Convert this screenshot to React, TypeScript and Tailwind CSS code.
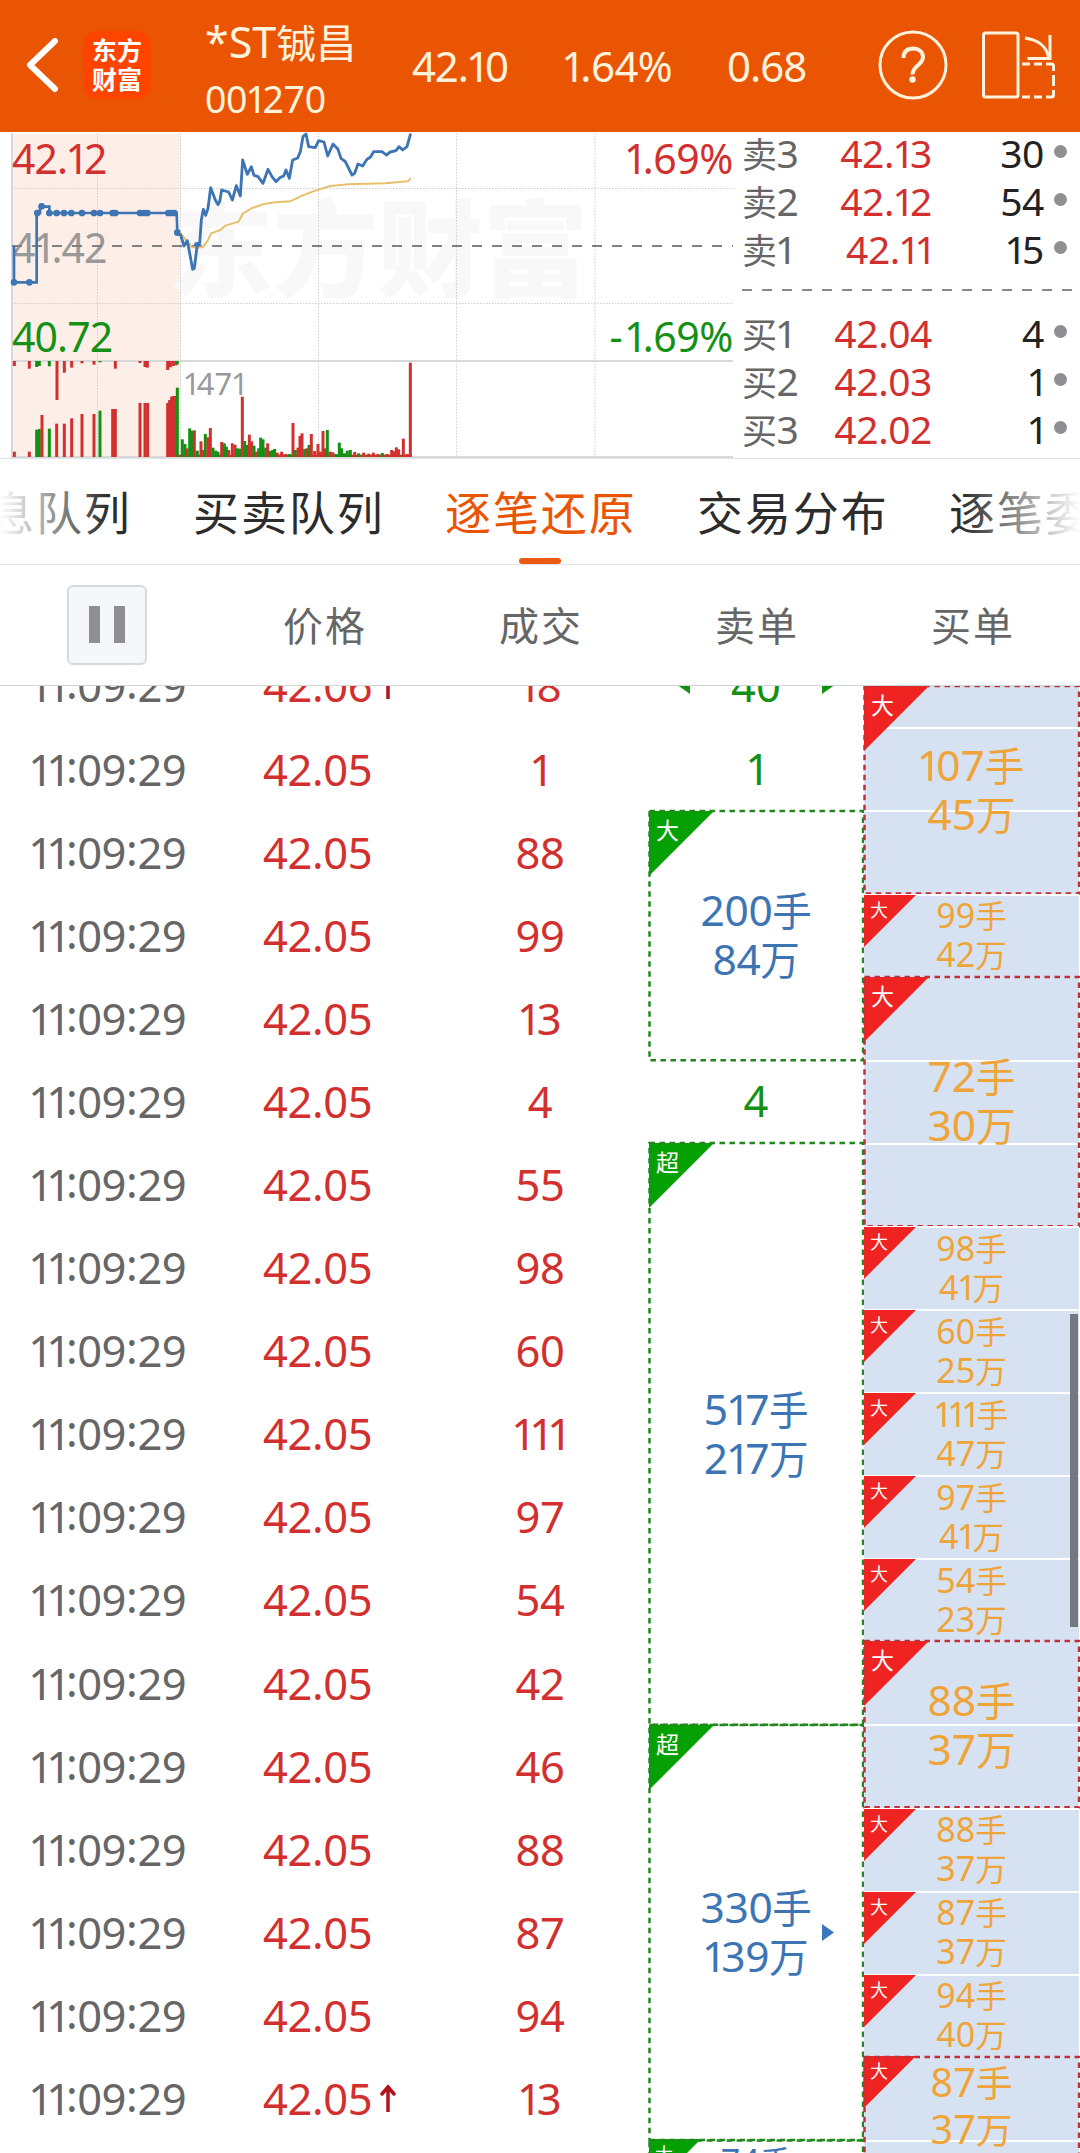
import React from "react";

/** Renders a label with narrow figure ones and slightly smaller Han glyphs. */
function Txt({ children, han = "text-[0.93em] leading-none" }: { children: string; han?: string }) {
  return (
    <>
      {children.split(/(1|[\u4e00-\u9fff]+)/).map((part, i) => {
        if (part === "") return null;
        if (part === "1")
          return (
            <span key={i} className="relative -left-[0.04em] tracking-[-0.16em]">
              1
            </span>
          );
        if (/[\u4e00-\u9fff]/.test(part))
          return (
            <span key={i} className={han}>
              {part}
            </span>
          );
        return <React.Fragment key={i}>{part}</React.Fragment>;
      })}
    </>
  );
}

const RED = "#d2302f";
const GREEN = "#149114";

type Bar = [number, number, "r" | "g"];

const preTop: Bar[] = [
  [43, 708, "r"], [88, 716, "r"], [110, 711, "g"], [118, 708, "g"], [148, 709, "g"], [171, 810, "r"],
  [193, 728, "r"], [215, 713, "r"], [246, 700, "r"], [282, 704, "r"], [300, 697, "g"], [346, 716, "r"],
  [420, 699, "r"], [435, 711, "r"], [442, 713, "r"], [503, 720, "r"], [511, 712, "r"], [520, 708, "r"],
  [528, 706, "r"], [532, 703, "g"],
];
const preBottom: Bar[] = [
  [43, 965, "r"], [88, 965, "r"], [110, 899, "g"], [118, 897, "g"], [126, 855, "r"], [148, 896, "g"],
  [170, 881, "r"], [193, 881, "r"], [215, 865, "r"], [246, 852, "r"], [282, 852, "r"], [300, 842, "g"],
  [338, 837, "r"], [346, 837, "r"], [420, 819, "r"], [435, 819, "r"], [443, 819, "r"], [503, 819, "r"],
  [509, 810, "r"], [515, 800, "r"], [520, 798, "r"], [526, 798, "r"], [532, 773, "g"],
];
const volume: Bar[] = [
  [31, 178, "g"], [39, 192, "g"], [45, 205, "r"], [53, 145, "g"], [60, 152, "g"], [67, 151, "r"],
  [76, 212, "g"], [87, 184, "r"], [93, 210, "r"], [100, 162, "g"], [108, 172, "r"], [115, 144, "r"],
  [123, 203, "g"], [131, 212, "g"], [138, 215, "g"], [149, 186, "r"], [157, 190, "g"], [163, 200, "g"],
  [170, 210, "r"], [181, 190, "r"], [189, 194, "r"], [196, 205, "g"], [203, 206, "g"], [211, 50, "r"],
  [218, 183, "g"], [225, 195, "g"], [232, 164, "r"], [239, 184, "r"], [246, 197, "g"], [253, 215, "r"],
  [260, 205, "g"], [266, 173, "g"], [273, 178, "g"], [281, 203, "g"], [287, 190, "r"], [295, 213, "g"],
  [302, 210, "g"], [308, 207, "g"], [316, 218, "r"], [329, 215, "r"], [340, 222, "r"], [352, 222, "g"],
  [363, 129, "r"], [370, 210, "g"], [378, 203, "r"], [384, 168, "r"], [390, 160, "r"], [398, 207, "g"],
  [404, 205, "r"], [411, 195, "g"], [418, 162, "r"], [428, 213, "r"], [438, 192, "r"], [445, 215, "r"],
  [453, 153, "r"], [460, 205, "r"], [466, 150, "g"], [475, 215, "r"], [483, 217, "r"], [492, 222, "g"],
  [502, 188, "g"], [509, 205, "g"], [517, 220, "g"], [526, 212, "g"], [535, 210, "g"], [548, 216, "r"],
  [560, 220, "g"], [575, 218, "r"], [590, 221, "r"], [604, 218, "r"], [618, 222, "r"], [631, 219, "g"],
  [645, 222, "r"], [659, 210, "r"], [666, 214, "r"], [673, 202, "r"], [680, 208, "r"], [694, 176, "r"],
  [706, 222, "r"], [715, -52, "r"],
];
const preDots: [number, number][] = [
  [42, 457], [88, 457], [112, 249], [125, 229], [148, 249], [170, 249], [192, 249], [214, 249], [246, 249],
  [282, 249], [300, 249], [338, 249], [346, 249], [420, 249], [432, 249], [442, 249], [505, 249],
  [514, 249], [523, 249], [532, 308], [592, 346],
];

const color = (c: "r" | "g") => (c === "r" ? RED : GREEN);

function Chart() {
  return (
    <div className="relative h-[326px] w-[733px] shrink-0 overflow-hidden">
      <svg width="733" height="326" viewBox="0 0 733 326" className="block" fill="none">
        <rect x="12" y="2" width="168.5" height="323" fill="#fdeee8" />
        <text x="168" y="156" fontSize="105" fontWeight="900" fill="#f8f8f8" fontFamily="Noto Sans CJK SC">
          东方财富
        </text>
        <g stroke="#cfcfcf" strokeWidth="1" strokeDasharray="1.5 1.5">
          <path d="M12 56.5H733M12 171.5H733" />
          <path d="M97.5 1V325M180.5 1V325M318.5 1V325M456.5 1V325M595 1V325" />
        </g>
        <path d="M12 1V326M12 229H733M12 325H733" stroke="#d8d8d8" strokeWidth="2" />
      </svg>
      <div className="absolute top-0 left-[12px] flex h-full flex-col text-[41px] leading-[44px] tracking-[-0.9px]">
        <span className="mt-[4px] text-[#d2302f]"><Txt>42.12</Txt></span>
        <span className="mt-[45px] text-[#999]"><Txt>41.42</Txt></span>
        <span className="mt-[45px] text-[#149114]"><Txt>40.72</Txt></span>
      </div>
      <div className="absolute top-0 right-0 flex h-full flex-col items-end text-[41px] leading-[44px] tracking-[-0.4px]">
        <span className="mt-[4px] text-[#d2302f]"><Txt>1.69%</Txt></span>
        <span className="mt-[134px] text-[#149114]"><span className="tracking-[3px]">-</span><Txt>1.69%</Txt></span>
      </div>
      <span className="absolute top-[231px] left-[184px] text-[31px] leading-[40px] text-[#999]"><Txt>1471</Txt></span>
      <svg width="733" height="326" viewBox="0 0 733 326" className="absolute inset-0" fill="none">
        <path d="M12 114H733" stroke="#808080" strokeWidth="2" strokeDasharray="10 10" />
        <g transform="translate(0 -2) scale(0.33333)">
          {preTop.map(([x, y, c], i) => (
            <rect key={i} x={x - 4.5} y={693} width={9} height={y - 693} fill={color(c)} />
          ))}
          {preBottom.map(([x, y, c], i) => (
            <rect key={i} x={x - 4.5} y={y} width={9} height={981 - y} fill={color(c)} />
          ))}
          <path d="M42 348V457H110V249H120V230H148V249H530L532 308" stroke="#3d74b3" strokeWidth="8" />
          {preDots.map(([x, y], i) => (
            <circle key={i} cx={x} cy={y} r="10" fill="#3d74b3" />
          ))}
        </g>
        <g transform="translate(172 248) scale(0.33333)">
          <rect x="16" y="224" width="704" height="7" fill="#a8491f" />
          {volume.map(([x, y, c], i) => (
            <rect key={i} x={x - 4.5} y={y} width={9} height={231 - y} fill={color(c)} />
          ))}
        </g>
        <g transform="translate(172 -2) scale(0.33333)" strokeLinejoin="round" strokeLinecap="round">
          <path
            d="M26 310L60 352L92 352L108 330L117 310L145 300L160 287L200 275L213 250L240 234L280 221L310 217L355 214L390 197L430 182L475 168L530 163L640 160L708 154L715 146"
            stroke="#e8c06c"
            strokeWidth="6"
          />
          <path
            d="M16 308L26 315L36 348L46 332L62 418L67 415L75 350L83 340L88 270L94 238L101 256L108 235L116 173L130 210L138 224L143 215L149 180L170 186L181 210L193 167L205 198L212 90L226 133L238 110L246 136L258 140L273 160L288 118L300 140L312 155L325 142L335 138L342 120L352 145L362 90L377 84L385 65L393 20L402 12L410 50L430 53L440 32L456 36L467 78L483 42L498 58L507 85L520 95L540 135L548 130L558 102L572 108L585 88L595 82L605 65L630 65L643 75L655 66L672 62L681 50L692 60L705 50L715 14"
            stroke="#3d74b3"
            strokeWidth="8.500"
          />
        </g>
      </svg>
    </div>
  );
}

function BookRow({ label, price, qty }: { label: string; price: string; qty: string }) {
  return (
    <div className="flex h-12 items-center text-[39px] leading-[48px] tracking-[-0.4px]">
      <span className="w-[66px] whitespace-nowrap text-[#666]"><Txt han="text-[35px] leading-none">{label}</Txt></span>
      <span className="w-[124px] text-right text-[#d2302f]"><Txt>{price}</Txt></span>
      <span className="w-[112px] text-right text-[#222]"><Txt>{qty}</Txt></span>
      <span className="-mt-1 ml-[10px] h-[13px] w-[13px] rounded-full bg-[#8e8e93]" />
    </div>
  );
}

function OrderBook() {
  return (
    <div className="flex w-[347px] flex-col pl-[9px]">
      <div className="-mt-[3px]">
        <BookRow label="卖3" price="42.13" qty="30" />
        <BookRow label="卖2" price="42.12" qty="54" />
        <BookRow label="卖1" price="42.11" qty="15" />
      </div>
      <svg width="332" height="36" className="block shrink-0">
        <path d="M0 17H332" stroke="#888" strokeWidth="2" strokeDasharray="10 10" />
      </svg>
      <BookRow label="买1" price="42.04" qty="4" />
      <BookRow label="买2" price="42.03" qty="1" />
      <BookRow label="买3" price="42.02" qty="1" />
    </div>
  );
}

function Header() {
  return (
    <header className="flex h-[132px] shrink-0 items-center bg-[#ea5504] text-[#fff3de]">
      <svg width="34" height="56" viewBox="0 0 34 56" fill="none" className="ml-[25px] shrink-0">
        <path d="M30 3L5 27L30 51" stroke="#fff" strokeWidth="6" strokeLinecap="round" strokeLinejoin="round" />
      </svg>
      <div className="-mt-[3px] ml-[24px] flex h-[68px] w-[68px] shrink-0 flex-col items-center justify-center rounded-[14px] bg-[#ff4400] text-[25px] leading-[29px] font-bold text-white">
        <span>东方</span>
        <span>财富</span>
      </div>
      <div className="ml-[54px] flex w-[207px] flex-col">
        <span className="mt-[12px] h-[60px] text-[43px] leading-[60px] whitespace-nowrap">*ST<span className="text-[40px] leading-none">铖昌</span></span>
        <span className="h-[60px] text-[37.5px] leading-[54px] tracking-[-0.4px]"><Txt>001270</Txt></span>
      </div>
      <span className="w-[151px] text-[42px] leading-[60px] tracking-[-1.2px]"><Txt>42.10</Txt></span>
      <span className="w-[164px] text-[42px] leading-[60px] tracking-[-0.6px]"><Txt>1.64%</Txt></span>
      <span className="w-[151px] text-[42px] leading-[60px] tracking-[-1px]"><Txt>0.68</Txt></span>
      <svg width="72" height="72" viewBox="0 0 72 72" fill="none" stroke="#fff3de" className="-mt-[3px] -ml-[1px] shrink-0">
        <circle cx="36" cy="36" r="33" strokeWidth="3" />
        <path d="M26.500 29C26.500 22 31 19.500 36.500 19.500C42 19.500 46 23 46 28C46 36 35.500 36.500 35.500 45.500" strokeWidth="4" />
        <circle cx="35.500" cy="50.500" r="3.200" fill="#fff3de" stroke="none" />
      </svg>
      <svg width="76" height="72" viewBox="0 0 76 72" fill="none" stroke="#fff3de" strokeWidth="3" className="-mt-[3px] ml-[32px] shrink-0">
        <rect x="2.500" y="4" width="34.500" height="64" rx="2" />
        <path d="M44 9C57 11 65 16 67.500 28M69 6V29.500H46.500" />
        <path d="M41 35H49M53 35H61M65 35H70.500Q72.500 35 72.500 37V42M72.500 46V57M72.500 61V66Q72.500 68 70.500 68H65M61 68H53M49 68H41" />
      </svg>
    </header>
  );
}

const tabs = ["息队列", "买卖队列", "逐笔还原", "交易分布", "逐笔委"];

function Tabs() {
  return (
    <nav className="relative flex h-[107px] shrink-0 overflow-hidden border-t border-b border-[#e1e4e6] text-[46px] leading-[107px] tracking-[1.9px] text-[#2c2c2c]">
      {tabs.map((t, i) => (
        <div
          key={t}
          className={
            i === 0
              ? "-ml-[12px] w-[205px] shrink-0 whitespace-nowrap"
              : i === 2
                ? "relative w-[252px] shrink-0 whitespace-nowrap text-[#ea5504]"
                : "w-[252px] shrink-0 whitespace-nowrap"
          }
        >
          {t}
          {i === 2 && <span className="absolute bottom-0 left-[74px] h-[6px] w-[42px] rounded-full bg-[#ea5a10]" />}
        </div>
      ))}
      <div className="absolute top-0 left-0 h-[104px] w-[108px] bg-linear-to-r from-white to-white/0" />
      <div className="absolute top-0 right-0 h-[104px] w-[118px] bg-linear-to-l from-white to-white/0" />
    </nav>
  );
}

function TableHead() {
  return (
    <div className="grid h-[121px] shrink-0 grid-cols-5 items-center border-b border-[#cfd6d4] text-center text-[40px] tracking-[2px] text-[#666]">
      <div className="-mt-[1px] flex h-[80px] w-[80px] -translate-x-px items-center justify-center gap-[14px] justify-self-center rounded-[6px] border-2 border-[#d6d9de] bg-[#f6f7fa]">
        <span className="h-[37px] w-[11px] bg-[#8e8e93]" />
        <span className="h-[37px] w-[11px] bg-[#8e8e93]" />
      </div>
      <span className="pt-[2px] pl-[2px]">价格</span>
      <span className="pt-[2px] pl-[2px]">成交</span>
      <span className="pt-[2px] pl-[2px]">卖单</span>
      <span className="pt-[2px] pl-[2px]">买单</span>
    </div>
  );
}

function UpArrow() {
  return (
    <svg width="16" height="28" viewBox="0 0 16 28" fill="none" className="ml-[8px]">
      <path d="M8 27V3M2 10L8 3L14 10" stroke="#b3121b" strokeWidth="3.500" strokeLinecap="round" />
    </svg>
  );
}

const trades: [string, string, boolean][] = [
  ["42.06", "18", true],
  ["42.05", "1", false],
  ["42.05", "88", false],
  ["42.05", "99", false],
  ["42.05", "13", false],
  ["42.05", "4", false],
  ["42.05", "55", false],
  ["42.05", "98", false],
  ["42.05", "60", false],
  ["42.05", "111", false],
  ["42.05", "97", false],
  ["42.05", "54", false],
  ["42.05", "42", false],
  ["42.05", "46", false],
  ["42.05", "88", false],
  ["42.05", "87", false],
  ["42.05", "94", false],
  ["42.05", "13", true],
];

function Trades() {
  return (
    <div className="-mt-[42.1px] w-[648px] text-[43.5px] leading-[60px]">
      {trades.map(([price, vol, up], i) => (
        <div key={i} className="grid h-[83.1px] grid-cols-3 items-center">
          <span className="pl-[30px] tracking-[-0.4px] whitespace-nowrap text-[#666]">
            <Txt>11</Txt>
            <span className="relative -top-[3px]">:</span>09
            <span className="relative -top-[3px]">:</span>29
          </span>
          <span className="flex items-center pl-[47px] text-[#d2302f]">
            <span className="tracking-[-0.4px]"><Txt>{price}</Txt></span>
            {up && <UpArrow />}
          </span>
          <span className="text-center tracking-[-0.4px] text-[#d2302f]"><Txt>{vol}</Txt></span>
        </div>
      ))}
    </div>
  );
}

function Corner({ label, small, fill }: { label: string; small?: boolean; fill: string }) {
  return (
    <div className={small ? "absolute -top-[1px] left-0 h-[52px] w-[52px]" : "absolute top-0 left-0 h-[65px] w-[65px]"}>
      <svg viewBox="0 0 10 10" className="absolute inset-0 h-full w-full">
        <path d="M0 0H10L0 10Z" fill={fill} />
      </svg>
      <span
        className={
          small
            ? "absolute top-[4px] left-[6px] text-[18px] leading-[22px] text-white"
            : "absolute top-[5px] left-[7px] text-[23px] leading-[28px] text-white"
        }
      >
        {label}
      </span>
    </div>
  );
}

function Dashed({ stroke }: { stroke: string }) {
  return (
    <svg className="absolute inset-0 h-full w-full overflow-visible">
      <rect x="0.5" y="0" width="99.8%" height="100%" fill="none" stroke={stroke} strokeWidth="2.500" strokeDasharray="5.5 4.500" />
    </svg>
  );
}

const ROW = 83.1;

function Plain({ children, arrows }: { children: string; arrows?: boolean }) {
  return (
    <div className="flex h-[83.1px] items-center justify-center text-[43.5px] leading-[60px] text-[#149114]">
      {arrows && (
        <svg width="12" height="17" className="mr-[41px]">
          <path d="M12 0V17L0 8.500Z" fill="#149114" />
        </svg>
      )}
      <span className="-mt-[2px]"><Txt>{children}</Txt></span>
      {arrows && (
        <svg width="12" height="17" className="ml-[41px]">
          <path d="M0 0V17L12 8.500Z" fill="#149114" />
        </svg>
      )}
    </div>
  );
}

function SellBox({ rows, tag, lots, amount, next }: { rows: number; tag: string; lots: string; amount: string; next?: boolean }) {
  return (
    <div
      className="relative ml-[1px] flex w-[214px] flex-col items-center justify-center pb-[2px] text-[42.5px] leading-[49px] text-[#3d74b3]"
      style={{ height: rows * ROW }}
    >
      <Corner label={tag} fill="#04a004" />
      <Dashed stroke="#23861f" />
      <span className="tracking-[-0.4px]"><Txt>{lots}</Txt></span>
      <span className="tracking-[-0.4px]"><Txt>{amount}</Txt></span>
      {next && (
        <svg width="12" height="17" className="absolute top-1/2 right-[29px] -mt-[8px]">
          <path d="M0 0V17L12 8.500Z" fill="#3a77bd" />
        </svg>
      )}
    </div>
  );
}

function Sells() {
  return (
    <div className="-mt-[41.6px] w-[216px]">
      <Plain arrows>40</Plain>
      <Plain>1</Plain>
      <SellBox rows={3} tag="大" lots="200手" amount="84万" />
      <Plain>4</Plain>
      <SellBox rows={7} tag="超" lots="517手" amount="217万" />
      <SellBox rows={5} tag="超" lots="330手" amount="139万" next />
      <div className="relative ml-[1px] h-[60px] w-[214px] pt-[2px] text-center text-[34px] leading-[39px] text-[#3d74b3]">
        <Corner label="大" small fill="#04a004" />
        <Dashed stroke="#23861f" />
        <Txt>74手</Txt>
      </div>
    </div>
  );
}

function BuySmall({ lots, amount }: { lots: string; amount: string }) {
  return (
    <div className="relative flex h-[83.1px] flex-col items-center justify-center border-t-2 border-white bg-[#d6e2f1] pb-[2px] text-[34px] leading-[39px] text-[#efa43a]">
      <Corner label="大" small fill="#f02323" />
      <span><Txt>{lots}</Txt></span>
      <span><Txt>{amount}</Txt></span>
    </div>
  );
}

function BuyBox({ height, lines, lots, amount, small }: { height: number; lines: number[]; lots: string; amount: string; small?: boolean }) {
  return (
    <div
      className={
        small
          ? "relative flex flex-col items-center justify-center bg-[#d6e2f1] text-[39.5px] leading-[47px] text-[#efa43a]"
          : "relative flex flex-col items-center justify-center bg-[#d6e2f1] pb-[2px] text-[42.5px] leading-[49px] text-[#efa43a]"
      }
      style={{ height }}
    >
      {lines.map((y) => (
        <span key={y} className="absolute left-0 h-[2px] w-full bg-white" style={{ top: y }} />
      ))}
      <Corner label="大" small={small} fill="#f02323" />
      <Dashed stroke="#bf3038" />
      <span className="relative"><Txt>{lots}</Txt></span>
      <span className="relative"><Txt>{amount}</Txt></span>
    </div>
  );
}

function Buys() {
  return (
    <div className="w-[215px]">
      <BuyBox height={207.6} lines={[41, 124]} lots="107手" amount="45万" />
      <BuySmall lots="99手" amount="42万" />
      <BuyBox height={ROW * 3} lines={[83, 166]} lots="72手" amount="30万" />
      <BuySmall lots="98手" amount="41万" />
      <BuySmall lots="60手" amount="25万" />
      <BuySmall lots="111手" amount="47万" />
      <BuySmall lots="97手" amount="41万" />
      <BuySmall lots="54手" amount="23万" />
      <BuyBox height={ROW * 2} lines={[83]} lots="88手" amount="37万" />
      <BuySmall lots="88手" amount="37万" />
      <BuySmall lots="87手" amount="37万" />
      <BuySmall lots="94手" amount="40万" />
      <BuyBox height={98} lines={[83]} lots="87手" amount="37万" small />
    </div>
  );
}

export default function App() {
  return (
    <div className="flex h-[2153px] w-[1080px] flex-col overflow-hidden bg-white font-['Noto_Sans','Noto_Sans_CJK_SC',sans-serif]">
      <Header />
      <section className="flex h-[326px] shrink-0 overflow-hidden">
        <Chart />
        <OrderBook />
      </section>
      <Tabs />
      <TableHead />
      <main className="relative flex h-[1467px] shrink-0 items-start overflow-hidden">
        <Trades />
        <Sells />
        <Buys />
        <span className="absolute top-[628px] right-[2px] h-[313px] w-[8px] bg-[#75797f]" />
      </main>
    </div>
  );
}
